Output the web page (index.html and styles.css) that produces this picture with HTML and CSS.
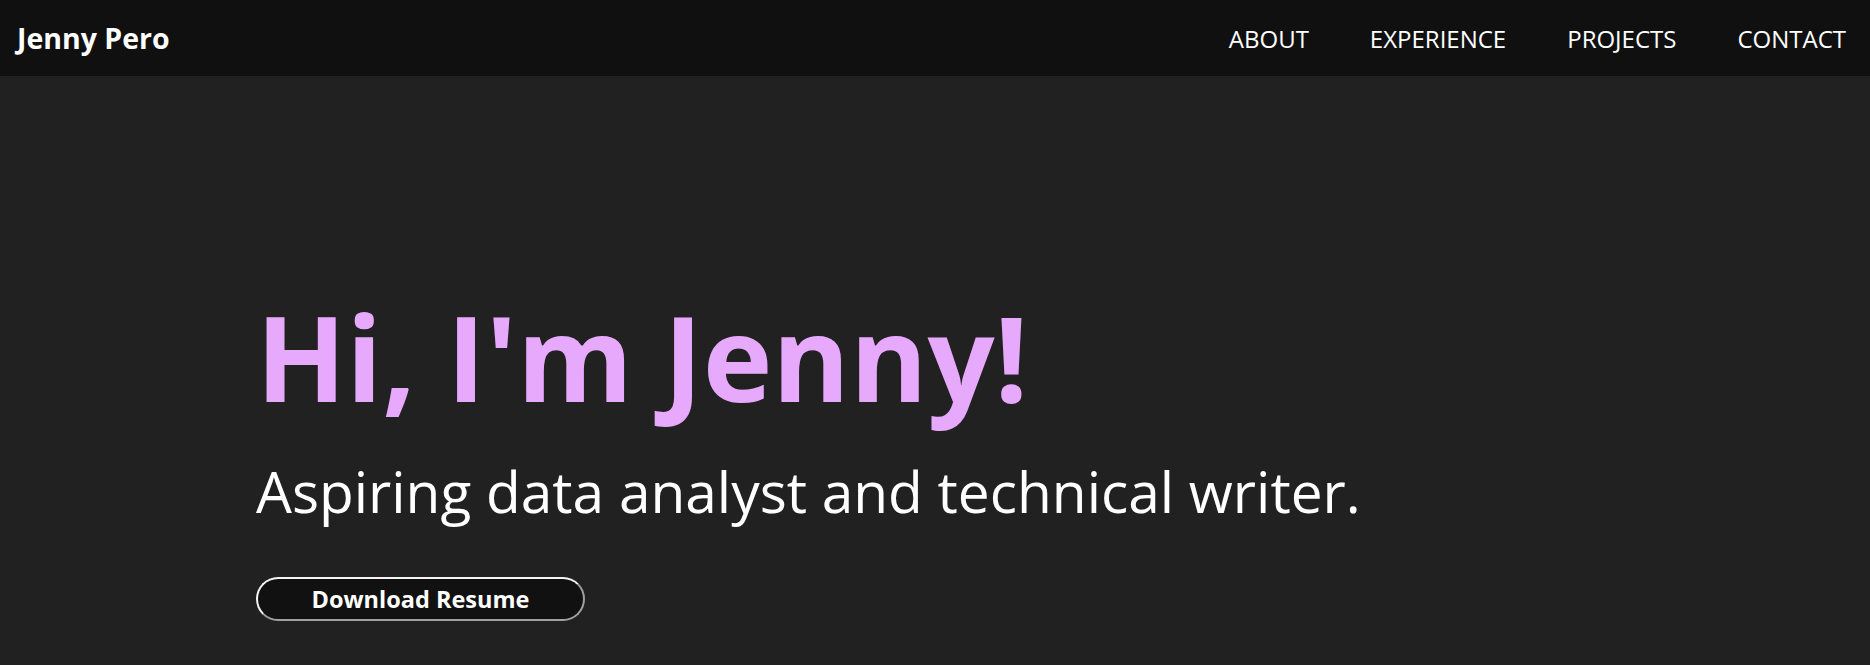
FILE: index.html
```html
<!DOCTYPE html>
<html lang="en">
<head>
<meta charset="utf-8">
<title>Jenny Pero</title>
<link rel="stylesheet" href="styles.css">
</head>
<body>
<header class="navbar">
  <a class="brand" href="#">Jenny Pero</a>
  <nav class="nav-links">
    <a href="#about">ABOUT</a>
    <a href="#experience">EXPERIENCE</a>
    <a href="#projects">PROJECTS</a>
    <a href="#contact">CONTACT</a>
  </nav>
</header>
<main class="hero">
  <h1 class="hero-title">Hi, I'm Jenny!</h1>
  <p class="hero-subtitle">Aspiring data analyst and technical writer.</p>
  <a class="resume-btn" href="#">Download Resume</a>
</main>
</body>
</html>
```
FILE: styles.css
```css
* { box-sizing: border-box; }
html, body {
  margin: 0;
  padding: 0;
  height: 100%;
}
body {
  background: #212121;
  color: #fff;
  font-family: "Open Sans", "Noto Sans", sans-serif;
  overflow: hidden;
}
a { color: inherit; text-decoration: none; }

.navbar {
  height: 76px;
  background: #101010;
  display: flex;
  align-items: center;
  justify-content: space-between;
  padding: 0 24px 0 17px;
}
.brand {
  font-size: 28.5px;
  font-weight: 700;
}
.nav-links {
  display: flex;
  gap: 61px;
}
.nav-links a {
  font-size: 24px;
  font-weight: 400;
}

.hero {
  padding: 222px 0 0 256px;
  display: flex;
  flex-direction: column;
  align-items: flex-start;
}
.hero-title {
  margin: 0;
  font-size: 118px;
  line-height: 118px;
  font-weight: 700;
  color: #e7a9fc;
}
.hero-subtitle {
  margin: 47px 0 0 0;
  font-size: 56.8px;
  line-height: 57px;
  font-weight: 400;
}
.resume-btn {
  margin-top: 57px;
  width: 329px;
  height: 44px;
  border: 2px solid;
  border-color: #f4f4f4 #a0a0a0 #a0a0a0 #f4f4f4;
  border-radius: 22px;
  background: #111;
  font-size: 23.5px;
  font-weight: 700;
  line-height: 40px;
  text-align: center;
}
```
